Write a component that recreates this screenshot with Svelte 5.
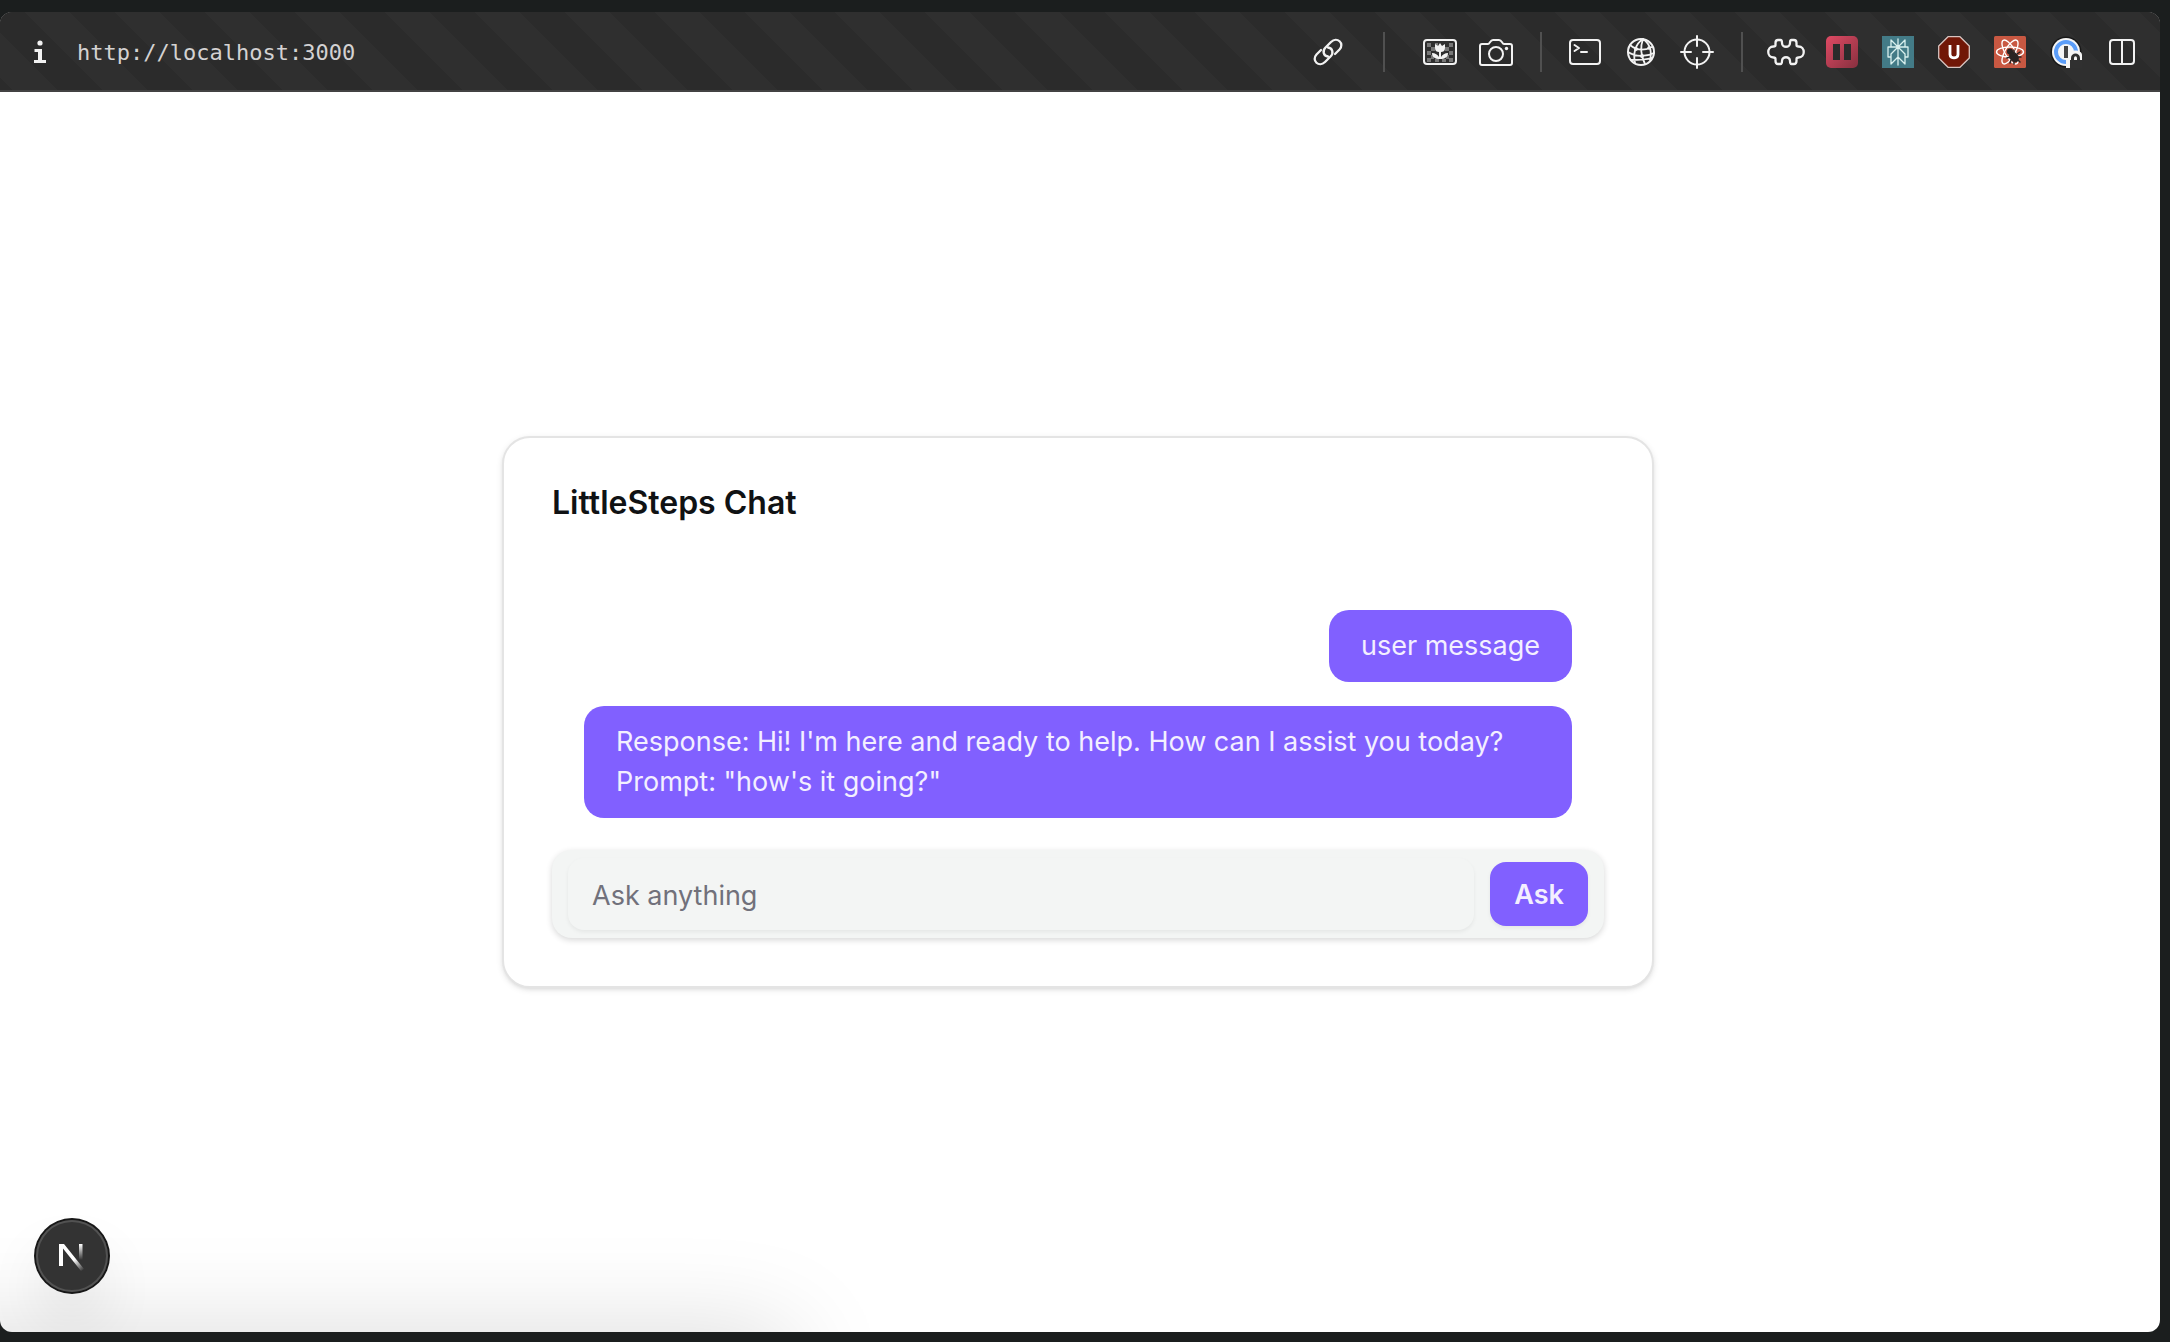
<script>
  let question = $state('');
  const messages = [
    { own: true, lines: ['user message'] },
    {
      own: false,
      lines: [
        "Response: Hi! I'm here and ready to help. How can I assist you today?",
        'Prompt: "how\'s it going?"'
      ]
    }
  ];
</script>

<div class="desktop">
  <div class="window">
    <header class="bar">
      <button class="info" aria-label="Site information">
        <svg width="14" height="24" viewBox="0 0 14 24" fill="#f2f2f2">
          <circle cx="7" cy="3" r="2.6" />
          <path d="M1.500 9H9v11h4v3H1v-3h4v-8H1.500z" />
        </svg>
      </button>
      <a class="url" href="http://localhost:3000">http://localhost:3000</a>

      <nav class="tools" aria-label="Browser tools">
        <button aria-label="Copy link">
          <svg width="34" height="34" viewBox="0 0 34 34" stroke-width="2.300">
            <path d="M17 21.500C12.500 21 11 16 14.500 12.500L20 7C26 1 34 8.500 28.500 14.500L24 19" />
            <path d="M17 12.500C21.500 13 23 18 19.500 21.500L14 27C8 33 0 25.500 5.500 19.500L10 15" />
          </svg>
        </button>
        <span class="rule wide"></span>
        <button aria-label="Images">
          <svg width="36" height="32" viewBox="0 0 36 32">
            <g fill="#777" stroke="none">
              <path d="M5 7h4v4H5zM13 7h3v3h-3zM27 7h4v4h-4zM9 11h4v4H9zM23 11h4v4h-4zM5 15h4v4H5zM27 15h4v4h-4zM9 19h3v4H9zM24 19h3v4h-3zM5 22h4v4H5zM13 23h4v3h-4zM20 23h4v3h-4zM27 22h4v4h-4z" />
            </g>
            <rect x="2" y="4" width="32" height="24" rx="3" />
            <path d="M13 8l3 2 2-3 2 3 3-2v4c0 3-2 4-4 4v5c1-2 4-4 7-4 0 4-3 6-8 6s-8-2-8-6c3 0 6 2 7 4v-5c-2 0-4-1-4-4z" fill="#f2f2f2" stroke="none" />
          </svg>
        </button>
        <button aria-label="Screenshot">
          <svg width="36" height="32" viewBox="0 0 36 32">
            <path d="M4 8h6c2 0 2-4 5-4h6c3 0 3 4 5 4h6q2 0 2 2v17q0 2-2 2H4q-2 0-2-2V10q0-2 2-2z" />
            <circle cx="18" cy="18" r="7" />
            <circle cx="28.500" cy="12.500" r="1.700" fill="#f2f2f2" stroke="none" />
          </svg>
        </button>
        <span class="rule"></span>
        <button aria-label="Console">
          <svg width="36" height="32" viewBox="0 0 36 32">
            <rect x="3" y="4" width="30" height="24" rx="3" />
            <path d="M7.500 9l4.500 3-4.500 3M14 16h6" />
          </svg>
        </button>
        <button aria-label="Network">
          <svg width="32" height="32" viewBox="0 0 32 32">
            <circle cx="16" cy="16" r="13" />
            <path d="M18 3C10 8 8 18 10 27M18 3c-3 8-2 17 2 25M18 3c7 5 9 13 7 21M5 9c6 5 14 6 22 2M3 16c8 5 18 5 26 1M6 24c7 0 14 0 21-2" stroke-width="1.800" />
            <g fill="#f2f2f2" stroke="none"><circle cx="11" cy="13" r="2" /><circle cx="17" cy="20" r="2" /><circle cx="24" cy="12" r="1.800" /></g>
          </svg>
        </button>
        <button aria-label="Select element">
          <svg width="36" height="36" viewBox="0 0 36 36">
            <circle cx="18" cy="18" r="12.500" />
            <path d="M18 2v10M18 24v10M2 18h10M24 18h10" />
          </svg>
        </button>
        <span class="rule"></span>
        <button aria-label="Extensions">
          <svg width="40" height="32" viewBox="0 0 40 32" stroke-width="2.300">
            <path d="M12 4h2.500c1.500 0 1.500 1.500 1.500 3 0 5 8 5 8 0 0-1.500 0-3 1.500-3H28q2.500 0 2.500 3v2q0 1.500 2 1.500c7 0 7 11 0 11q-2 0-2 1.500v2q0 3-2.500 3h-2.500c-1.500 0-1.500-1.500-1.500-3 0-5-8-5-8 0 0 1.500 0 3-1.500 3H12q-2.500 0-2.500-3v-2q0-1.500-2-1.500c-7 0-7-11 0-11q2 0 2-1.500V7q0-3 2.500-3z" />
          </svg>
        </button>
        <button aria-label="Pause extension">
          <svg width="32" height="32" viewBox="0 0 32 32" stroke="none">
            <defs>
              <linearGradient id="red" x1="0" y1="0" x2="1" y2="1">
                <stop offset="0" stop-color="#e04a64" />
                <stop offset="1" stop-color="#87303f" />
              </linearGradient>
            </defs>
            <rect width="32" height="32" rx="5" fill="url(#red)" />
            <path d="M7 8h7v16H7zM18 8h7v16h-7z" fill="#2b2b2b" />
          </svg>
        </button>
        <button aria-label="Search extension">
          <svg width="32" height="32" viewBox="0 0 32 32" stroke="#d9f0ee" stroke-width="1.300">
            <rect width="32" height="32" fill="#437b87" stroke="none" />
            <path d="M16 3v26M16 11L9 4v7M16 11l7-7v7M6 11h20v10h-3M6 11v10h3M16 11l-7 7v10l7-7M16 11l7 7v10l-7-7" />
          </svg>
        </button>
        <button aria-label="Content blocker">
          <svg width="32" height="32" viewBox="0 0 32 32">
            <path d="M10 .7h12L31.300 10v12L22 31.300H10L.7 22V10z" fill="#711707" stroke="#d8c4c0" stroke-width="1.300" />
            <path d="M12 9v9.500c0 4.500 8 4.500 8 0V9" stroke="#fff" stroke-width="2.800" stroke-linecap="butt" />
          </svg>
        </button>
        <button aria-label="React developer tools">
          <svg width="32" height="32" viewBox="0 0 32 32" stroke="#fff" stroke-width="1.400">
            <rect width="32" height="32" rx="1.500" fill="#c85842" stroke="none" />
            <ellipse cx="16" cy="16" rx="13.500" ry="5" />
            <ellipse cx="16" cy="16" rx="13.500" ry="5" transform="rotate(60 16 16)" />
            <ellipse cx="16" cy="16" rx="13.500" ry="5" transform="rotate(120 16 16)" />
            <g fill="#2b2423" stroke="#2b2423" stroke-width="1.500">
              <circle cx="16" cy="15.500" r="2.300" />
              <ellipse cx="20" cy="21" rx="3.500" ry="5" transform="rotate(-40 20 21)" />
              <path d="M20 17v-3M23 18l3-2M24 21h3M16 21l-3 1M17 24l-1 3M20 25v3M24 24l2 2" />
            </g>
          </svg>
        </button>
        <button aria-label="Password manager, locked">
          <svg width="32" height="32" viewBox="0 0 32 32" stroke="none">
            <circle cx="16" cy="16" r="15.500" fill="#181818" />
            <circle cx="16" cy="16" r="14" fill="#f5f5f5" />
            <circle cx="16" cy="16" r="10" stroke="#5b9df8" stroke-width="4" />
            <path d="M14 10h4v12h-4z" fill="#444" />
            <path d="M16 32V22h3v-3c0-6 13-6 13 0v13z" fill="#f5f5f5" />
            <path d="M20 32v-8h1v-2c0-6 9-6 9 0v2h2v8z" fill="#303030" />
            <path d="M24 24v-1.500c0-3 3-3 3 0V24z" fill="#f5f5f5" />
          </svg>
        </button>
        <button aria-label="Split view">
          <svg width="32" height="32" viewBox="0 0 32 32">
            <rect x="4" y="4" width="24" height="24" rx="3" />
            <path d="M16 4v24" />
          </svg>
        </button>
      </nav>
    </header>

    <main class="page">
      <div class="haze"></div>
      <section class="card">
        <h1>LittleSteps Chat</h1>
        <div class="messages">
          {#each messages as message}
            <p class="bubble" class:own={message.own}>
              {#each message.lines as line}<span>{line}</span>{/each}
            </p>
          {/each}
        </div>
        <form class="ask" onsubmit={(event) => event.preventDefault()}>
          <input type="text" placeholder="Ask anything" aria-label="Ask anything" bind:value={question} />
          <button type="submit">Ask</button>
        </form>
      </section>
      <button class="badge" aria-label="Open Next.js Dev Tools">
        <svg width="28" height="30" viewBox="0 0 28 30">
          <defs>
            <linearGradient id="stem" x1="0" y1="0" x2="0" y2="1">
              <stop offset="0" stop-color="#fff" />
              <stop offset="1" stop-color="#fff" stop-opacity="0" />
            </linearGradient>
            <linearGradient id="diagonal" gradientUnits="userSpaceOnUse" x1="17" y1="18" x2="26" y2="29">
              <stop offset="0" stop-color="#fff" />
              <stop offset="1" stop-color="#fff" stop-opacity="0" />
            </linearGradient>
          </defs>
          <rect x="21" y="3" width="3.500" height="16" fill="url(#stem)" />
          <path d="M1 3h5l20 25-3 2L5 7.500V25H1z" fill="url(#diagonal)" />
        </svg>
      </button>
    </main>
  </div>
</div>

<style>
  :global(body) {
    margin: 0;
    background: #1b1e1e;
  }

  .desktop {
    box-sizing: border-box;
    display: flex;
    min-height: 100vh;
    padding: 12px 10px 10px 0;
    font-family: Inter, 'Liberation Sans', sans-serif;
  }

  .window {
    flex: 1;
    display: flex;
    flex-direction: column;
    border-radius: 12px;
    overflow: hidden;
    background: #fff;
  }

  button {
    margin: 0;
    padding: 0;
    border: 0;
    background: none;
    font: inherit;
    cursor: pointer;
  }

  .bar {
    box-sizing: border-box;
    display: flex;
    align-items: center;
    height: 80px;
    padding: 2px 10px 0 33px;
    border-bottom: 2px solid #434243;
    background-color: #2b2b2b;
    background-image: linear-gradient(
      45deg,
      #2b2b2b 25%,
      #2f2f2f 25%,
      #2f2f2f 50%,
      #2b2b2b 50%,
      #2b2b2b 75%,
      #2f2f2f 75%
    );
    background-size: 90px 90px;
    background-position: -20px 0;
  }

  .info {
    display: flex;
    margin-right: 30px;
  }

  .url {
    flex: 1;
    padding-top: 2px;
    color: #d4d2d2;
    font-family: 'DejaVu Sans Mono', monospace;
    font-size: 22px;
    line-height: 32px;
    text-decoration: none;
  }

  .tools {
    display: flex;
    align-items: center;
  }

  .tools button {
    display: flex;
    align-items: center;
    justify-content: center;
    width: 56px;
    height: 56px;
  }

  .tools svg {
    fill: none;
    stroke-linecap: round;
    stroke-linejoin: round;
  }

  .tools svg:not([stroke]) {
    stroke: #f2f2f2;
  }

  .tools svg:not([stroke-width]) {
    stroke-width: 2;
  }

  .rule {
    width: 2px;
    height: 40px;
    margin: 0 15px 0 16px;
    background: #505050;
  }

  .rule.wide {
    margin: 0 27px;
  }

  .page {
    position: relative;
    flex: 1;
    display: flex;
    align-items: center;
    justify-content: center;
    padding: 32px 36px 32px 32px;
  }

  .card {
    position: relative;
    box-sizing: border-box;
    width: 100%;
    max-width: 1152px;
    padding: 48px;
    border: 2px solid #e4e4e4;
    border-radius: 28px;
    background: #fff;
    box-shadow:
      0 2px 6px rgba(0, 0, 0, 0.1),
      0 2px 4px -2px rgba(0, 0, 0, 0.1);
  }

  h1 {
    margin: 0 0 58px;
    color: #101214;
    font-size: 32px;
    font-weight: 600;
    line-height: 34px;
  }

  .messages {
    display: flex;
    flex-direction: column;
    gap: 24px;
    padding: 32px;
  }

  .bubble {
    align-self: stretch;
    margin: 0;
    padding: 16px 32px;
    border-radius: 20px;
    background: #8160ff;
    color: #f3efff;
    font-size: 27px;
    line-height: 40px;
  }

  .bubble.own {
    align-self: flex-end;
  }

  .bubble span {
    display: block;
  }

  .ask {
    display: flex;
    align-items: center;
    gap: 16px;
    padding: 8px 16px;
    border-radius: 20px;
    background: #f3f5f4;
    box-shadow: 0 2px 6px rgba(0, 0, 0, 0.16);
  }

  .ask input {
    box-sizing: border-box;
    flex: 1;
    min-width: 0;
    height: 72px;
    padding: 2px 24px 0;
    border: 0;
    border-radius: 16px;
    outline: 0;
    background: #f3f5f4;
    box-shadow: 0 2px 4px rgba(0, 0, 0, 0.06);
    color: #101214;
    font: inherit;
    font-size: 27px;
  }

  .ask input::placeholder {
    color: #71717b;
    opacity: 1;
  }

  .ask button {
    height: 64px;
    padding: 0 24px;
    border-radius: 16px;
    background: #8160ff;
    box-shadow: 0 2px 4px rgba(0, 0, 0, 0.06);
    color: #f3efff;
    font-size: 27px;
    font-weight: 600;
  }

  .haze {
    position: absolute;
    left: -100px;
    top: 100%;
    width: 890px;
    height: 100px;
    box-shadow: 0 0 100px rgba(0, 0, 0, 0.15);
    pointer-events: none;
  }

  .badge {
    position: absolute;
    left: 36px;
    bottom: 40px;
    display: flex;
    align-items: center;
    justify-content: center;
    width: 72px;
    height: 72px;
    border-radius: 50%;
    background: #333;
    box-shadow:
      0 0 0 2px #171717,
      inset 0 0 0 2px #525252,
      0 32px 64px -16px rgba(0, 0, 0, 0.24);
  }
</style>
